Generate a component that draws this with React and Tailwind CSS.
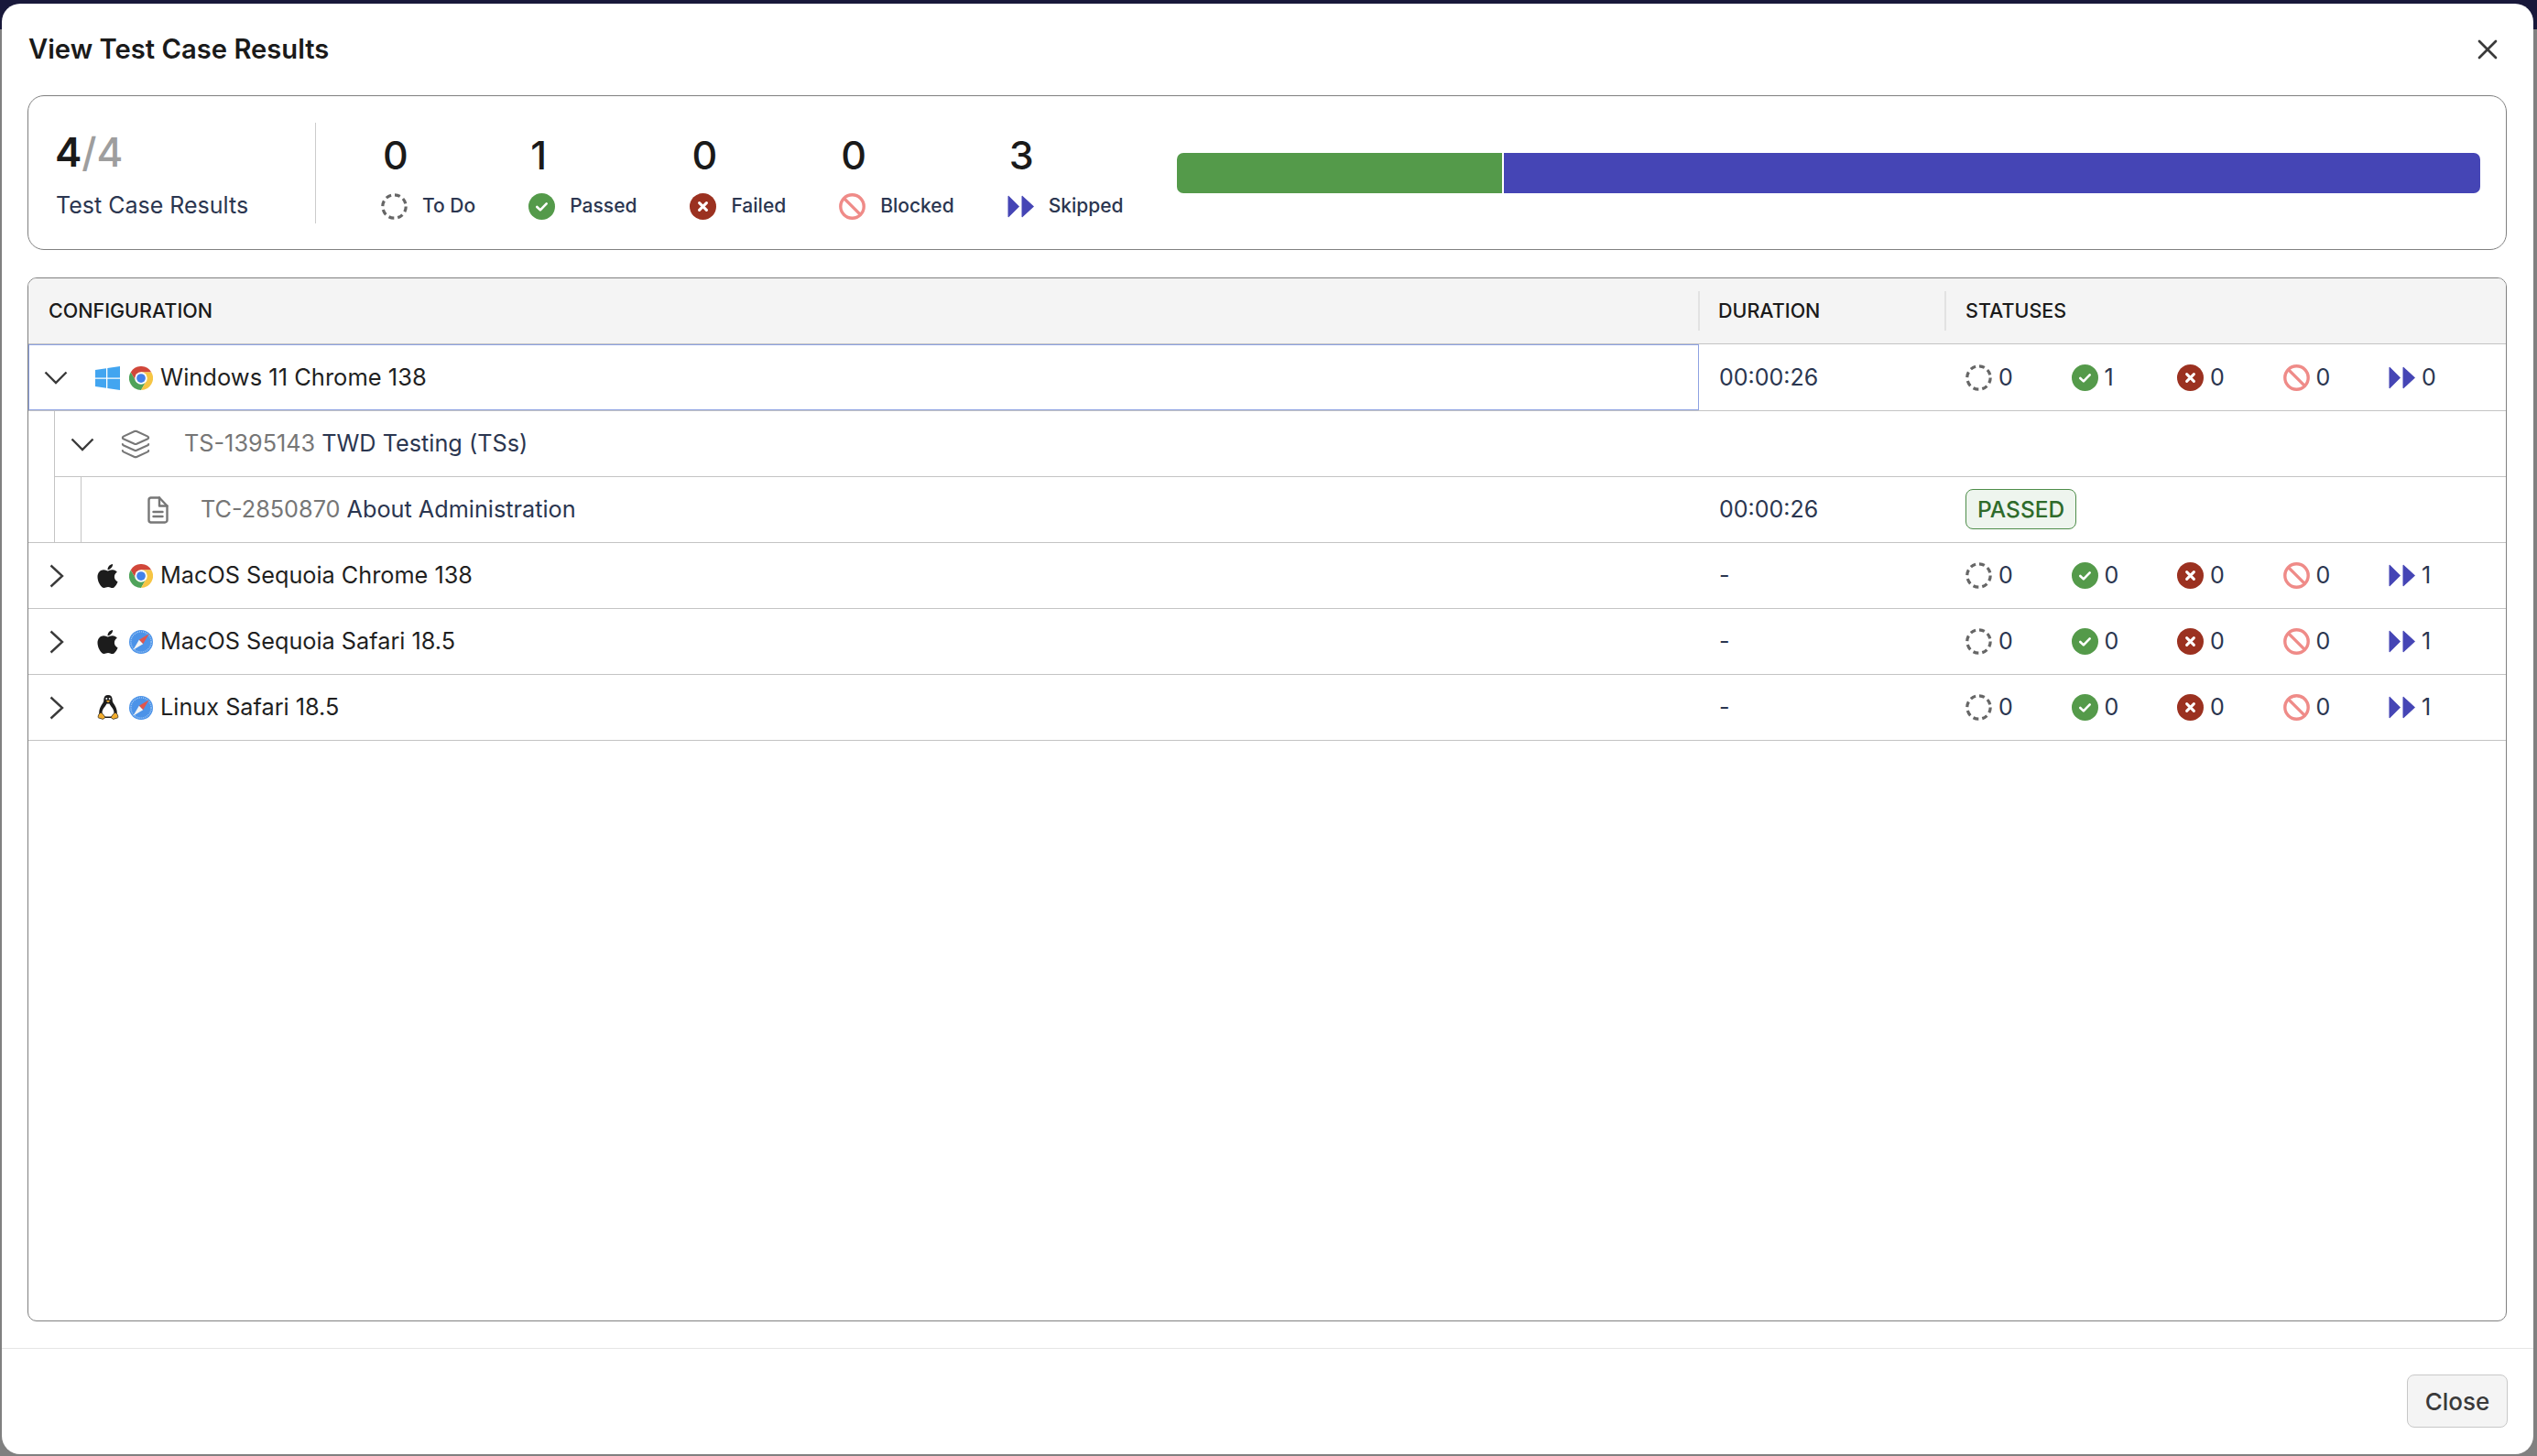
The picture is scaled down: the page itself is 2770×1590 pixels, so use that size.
import React from "react";
import { FaApple } from "react-icons/fa";
import { Layers, X } from "lucide-react";

const TodoIcon = () => (
  <svg width="29" height="29" viewBox="0 0 29 29" fill="none">
    <circle cx="14.5" cy="14.5" r="12.7" stroke="#666" strokeWidth="3.2" strokeDasharray="6 4" />
  </svg>
);

const PassedIcon = () => (
  <svg width="29" height="29" viewBox="0 0 29 29" fill="none">
    <circle cx="14.5" cy="14.5" r="14.5" fill="#549a4a" />
    <path d="M9.3 15l3.6 3.4 6.8-7" stroke="#fff" strokeWidth="2.6" strokeLinecap="round" strokeLinejoin="round" />
  </svg>
);

const FailedIcon = () => (
  <svg width="29" height="29" viewBox="0 0 29 29" fill="none">
    <circle cx="14.5" cy="14.5" r="14.5" fill="#9b3120" />
    <path d="M10.6 10.6l7.8 7.8M18.4 10.6l-7.8 7.8" stroke="#fff" strokeWidth="3" strokeLinecap="round" />
  </svg>
);

const BlockedIcon = () => (
  <svg width="29" height="29" viewBox="0 0 29 29" fill="none">
    <circle cx="14.5" cy="14.5" r="12.7" stroke="#ef8b88" strokeWidth="3.4" />
    <path d="M5.6 5.6l17.8 17.8" stroke="#ef8b88" strokeWidth="3.4" />
  </svg>
);

const SkippedIcon = () => (
  <svg width="29" height="29" viewBox="0 0 29 29" fill="none">
    <path d="M0.5 3.5c0-.6.6-.9 1-.5l11.5 11.5L1.5 26c-.4.4-1 .1-1-.5z" fill="#4545b5" />
    <path d="M15.5 3.5c0-.6.6-.9 1-.5L29 14.5 16.5 26c-.4.4-1 .1-1-.5z" fill="#4545b5" />
  </svg>
);

const WindowsIcon = () => (
  <svg width="27" height="26" viewBox="0 0 27 26" fill="#42a5f0">
    <polygon points="0,4 12,2.3 12,12.4 0,12.4" />
    <polygon points="13.3,2.1 27,0 27,12.4 13.3,12.4" />
    <polygon points="0,13.7 12,13.7 12,23.7 0,22" />
    <polygon points="13.3,13.7 27,13.7 27,26 13.3,23.9" />
  </svg>
);

const ChromeIcon = () => (
  <svg width="26" height="26" viewBox="0 0 48 48">
    <path d="M3.2 12A24 24 0 0 1 44.8 12L24 12 13.6 30z" fill="#d1473a" />
    <path d="M3.2 12A24 24 0 0 0 24 48L34.4 30 13.6 30z" fill="#4fa35a" />
    <path d="M44.8 12A24 24 0 0 1 24 48L34.4 30 24 12z" fill="#f6c544" />
    <circle cx="24" cy="24" r="12.5" fill="#fff" />
    <circle cx="24" cy="24" r="9" fill="#4381ea" />
  </svg>
);

const SafariIcon = () => (
  <svg width="26" height="26" viewBox="0 0 48 48">
    <circle cx="24" cy="24" r="24" fill="#4c93e8" />
    <circle cx="24" cy="24" r="20.5" fill="none" stroke="#b4d4f7" strokeWidth="2.5" strokeDasharray="1.5 2.2" />
    <polygon points="40,8 28,28 20,20" fill="#e2554c" />
    <polygon points="8,40 20,20 28,28" fill="#f4f4f4" />
  </svg>
);

const LinuxIcon = () => (
  <svg width="24" height="27" viewBox="0 0 24 27">
    <path d="M12 0C8.800 0 7.200 2.200 7.300 5.500c0 1.500-.7 2.800-1.700 4.200C4 12 2.200 15.500 2.200 19c0 2.600 1.600 5.600 3.800 6h12c2.200-.4 3.800-3.400 3.800-6 0-3.500-1.800-7-3.400-9.300-1-1.400-1.700-2.700-1.700-4.200C16.800 2.200 15.200 0 12 0z" fill="#1c1c1c" />
    <path d="M10.500 9.500c-1 2.600-5 5.800-5 9.500 0 2.400 1.200 4.300 2.500 4.600h8c1.300-.3 2.500-2.200 2.500-4.600 0-3.700-4-6.900-5-9.500z" fill="#fff" />
    <circle cx="10.300" cy="3.900" r="1" fill="#fff" />
    <circle cx="13.700" cy="3.900" r="1" fill="#fff" />
    <path d="M9.600 5.900h4.800L12 8.200z" fill="#f2ad2e" />
    <path d="M4 19l2.400 1.800 2.600 3.600-2.600 2-4.800-1.500c-.6-.3-.7-.7-.5-1.100L1.600 21.500z" fill="#f2ad2e" stroke="#1c1c1c" strokeWidth=".7" />
    <path d="M20 19l-2.400 1.800-2.600 3.600 2.600 2 4.800-1.500c.6-.3.7-.7.5-1.100L22.400 21.500z" fill="#f2ad2e" stroke="#1c1c1c" strokeWidth=".7" />
  </svg>
);

const DocIcon = () => (
  <svg width="23" height="30" viewBox="0 0 23 30" fill="none" stroke="#777" strokeWidth="2.4" strokeLinejoin="round" strokeLinecap="round">
    <path d="M3.5 1.500h9.500l8.500 9v15.500a2.500 2.500 0 0 1-2.500 2.500H3.500A2.500 2.500 0 0 1 1.500 26V4a2.500 2.500 0 0 1 2-2.500z" />
    <path d="M13 1.500v9h8.500" />
    <path d="M6.500 17h10M6.500 22h10" />
  </svg>
);

const ChevronDown = () => (
  <svg width="26" height="15" viewBox="0 0 26 15" fill="none" stroke="#3a3a3a" strokeWidth="2.4">
    <path d="M1.500 1.500L13 13 24.500 1.500" />
  </svg>
);

const ChevronRight = () => (
  <svg width="16" height="26" viewBox="0 0 16 26" fill="none" stroke="#3a3a3a" strokeWidth="2.4">
    <path d="M1.500 1.500L14 13 1.500 24.500" />
  </svg>
);

const stats = [
  { label: "To Do", value: 0, icon: <TodoIcon /> },
  { label: "Passed", value: 1, icon: <PassedIcon /> },
  { label: "Failed", value: 0, icon: <FailedIcon /> },
  { label: "Blocked", value: 0, icon: <BlockedIcon /> },
  { label: "Skipped", value: 3, icon: <SkippedIcon /> },
];

const rowIcons = [<TodoIcon />, <PassedIcon />, <FailedIcon />, <BlockedIcon />, <SkippedIcon />];

const StatusCounts = ({ counts }) => (
  <div className="flex items-center pl-[22px]">
    {counts.map((count, idx) => (
      <div key={idx} className="flex w-[115.5px] items-center gap-[7px]">
        {rowIcons[idx]}
        <span className="text-[25px] text-[#2b3650]">{count}</span>
      </div>
    ))}
  </div>
);

const configs = [
  { name: "MacOS Sequoia Chrome 138", os: <FaApple size={30} color="#1c1c1c" />, browser: <ChromeIcon /> },
  { name: "MacOS Sequoia Safari 18.5", os: <FaApple size={30} color="#1c1c1c" />, browser: <SafariIcon /> },
  { name: "Linux Safari 18.5", os: <LinuxIcon />, browser: <SafariIcon /> },
];

const App = () => {
  return (
    <div className="relative flex h-[1590px] w-[2770px] overflow-hidden bg-[#808080] pt-[4px] pr-[4px] pb-[2px] pl-[2px] font-[Inter,sans-serif]">
      <div className="absolute top-0 left-0 h-[32px] w-full bg-[#18183a]" />
      <div className="relative flex flex-1 flex-col rounded-[20px] bg-white">
        <div className="flex h-[100px] items-center justify-between pr-[32px] pl-[29px]">
          <h2 className="text-[29.2px] font-semibold text-[#1a1a1a]">View Test Case Results</h2>
          <X size={36} strokeWidth={1.8} color="#3a3a3a" />
        </div>

        <div className="mr-[29px] ml-[28px] flex h-[169px] items-center rounded-[18px] border border-[#808080] pr-[28px] pl-[29px]">
          <div className="mt-[4px] w-[284px] shrink-0">
            <div className="text-[44px] leading-[50px] font-semibold text-[#1a1a1a]">
              4<span className="font-medium text-[#9e9e9e]">/4</span>
            </div>
            <div className="mt-[17px] pl-[1px] text-[25px] leading-[32px] text-[#2b3650]">Test Case Results</div>
          </div>
          <div className="h-[110px] w-px shrink-0 bg-[#cccccc]" />
          <div className="mt-[8px] ml-[71px] flex shrink-0 gap-[58px]">
            {stats.map((stat) => (
              <div key={stat.label}>
                <div className="pl-[2px] text-[43px] leading-[50px] font-medium text-[#1a1a1a]">{stat.value}</div>
                <div className="mt-[15px] flex items-center gap-[16px]">
                  {stat.icon}
                  <span className="text-[21px] font-medium text-[#2b3650]">{stat.label}</span>
                </div>
              </div>
            ))}
          </div>
          <div className="ml-[58px] flex h-[44px] flex-1 gap-[2px] overflow-hidden rounded-[7px]">
            <div className="flex-1 bg-[#549a4a]" />
            <div className="flex-3 bg-[#4545b5]" />
          </div>
        </div>

        <div className="mt-[30px] mr-[29px] ml-[28px] flex-1 overflow-hidden rounded-[10px] border border-[#808080]">
          <div className="flex h-[72px] items-center border-b border-[#c4c4c4] bg-[#f4f4f4] text-[21.5px] font-medium text-[#1a1a1a]">
            <div className="w-[1823px] pl-[22px]">CONFIGURATION</div>
            <div className="h-[43px] w-[269px] border-l-2 border-[#e2e2e2] pt-[8px] pl-[20px] leading-[27px]">DURATION</div>
            <div className="h-[43px] flex-1 border-l-2 border-[#e2e2e2] pt-[8px] pl-[21px] leading-[27px]">STATUSES</div>
          </div>

          <div className="flex h-[73px] items-center border-b border-[#c4c4c4]">
            <div className="flex h-[72px] w-[1824px] items-center border border-[#8ea2e2] pt-[1px] pl-[16px]">
              <ChevronDown />
              <div className="ml-[30px]"><WindowsIcon /></div>
              <div className="ml-[10px]"><ChromeIcon /></div>
              <span className="ml-[8px] text-[25.5px] text-[#1f1f1f]">Windows 11 Chrome 138</span>
            </div>
            <div className="w-[269px] pt-[2px] pl-[22px] text-[25px] text-[#2b3650]">00:00:26</div>
            <div className="pt-[1px]">
              <StatusCounts counts={[0, 1, 0, 0, 0]} />
            </div>
          </div>

          <div className="border-b border-[#c4c4c4]">
            <div className="ml-[28px] border-l border-[#c4c4c4]">
              <div className="flex h-[72px] items-center border-b border-[#c4c4c4] pt-[1px] pl-[17px]">
                <ChevronDown />
                <Layers size={34} strokeWidth={1.5} color="#777" className="ml-[28px]" />
                <span className="ml-[36px] text-[25.25px] text-[#767676]">TS-1395143</span>
                <span className="ml-[7px] text-[25.25px] text-[#2b3650]">TWD Testing (TSs)</span>
              </div>
              <div className="ml-[28px] flex h-[71px] items-center border-l border-[#c4c4c4]">
                <div className="flex w-[1766px] items-center pl-[72px]">
                  <DocIcon />
                  <span className="ml-[35px] text-[25.25px] text-[#767676]">TC-2850870</span>
                  <span className="ml-[7px] text-[25.25px] text-[#2b3650]">About Administration</span>
                </div>
                <div className="w-[269px] pl-[22px] text-[25px] text-[#2b3650]">00:00:26</div>
                <div className="pl-[22px]">
                  <span className="mb-[2px] block rounded-[8px] border border-[#4e8d4a] bg-[#eef5ee] px-[12px] text-[24.5px] leading-[42px] font-medium text-[#2f6b2b]">PASSED</span>
                </div>
              </div>
            </div>
          </div>

          {configs.map((config) => (
            <div key={config.name} className="flex h-[72px] items-center border-b border-[#c4c4c4]">
              <div className="flex w-[1824px] items-center pl-[23px]">
                <ChevronRight />
                <div className="ml-[34px] flex w-[27px] justify-center">{config.os}</div>
                <div className="ml-[10px]">{config.browser}</div>
                <span className="ml-[8px] text-[25.25px] text-[#1f1f1f]">{config.name}</span>
              </div>
              <div className="w-[269px] pl-[22px] text-[25px] text-[#2b3650]">-</div>
              <StatusCounts counts={[0, 0, 0, 0, 1]} />
            </div>
          ))}
        </div>

        <div className="mt-[29px] flex h-[116px] justify-end border-t border-[#e5e5e5] pt-[28px] pr-[28px]">
          <button className="h-[58px] w-[110px] rounded-[8px] border border-[#c8c8c8] bg-[#f4f4f4] text-[26px] font-medium text-[#3a3a3a]">Close</button>
        </div>
      </div>
    </div>
  );
};

export default App;
